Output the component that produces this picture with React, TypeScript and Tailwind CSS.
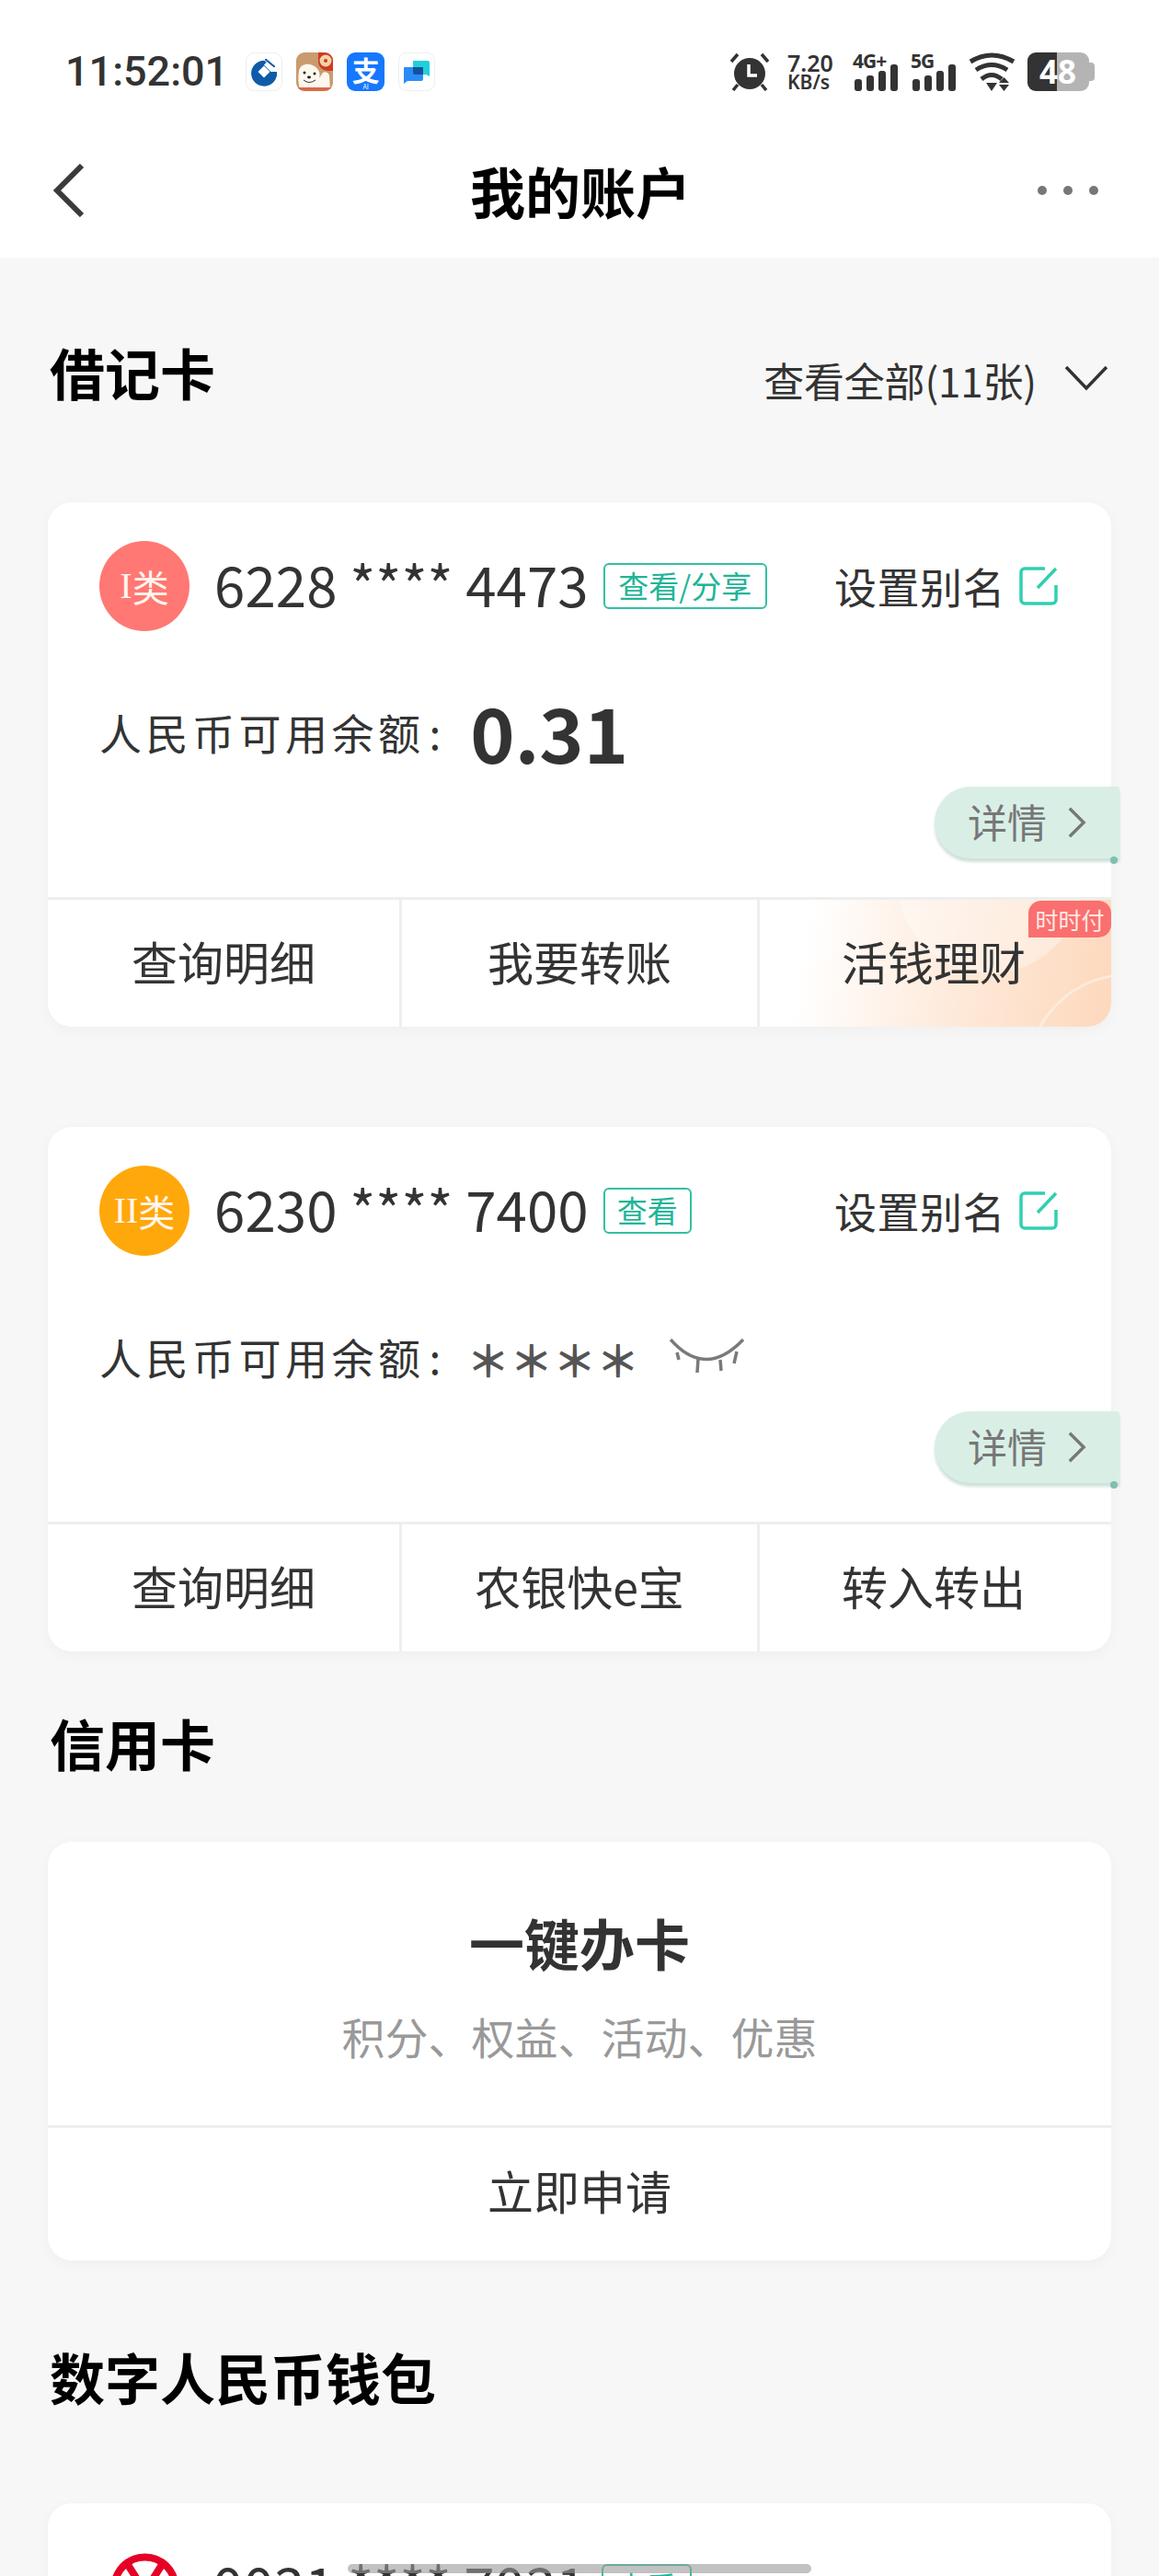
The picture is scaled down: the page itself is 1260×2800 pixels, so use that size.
import type { ReactNode } from 'react';

const Chevron = ({ className }: { className: string }) => (
  <svg className={className} viewBox="0 0 24 40" fill="none" stroke="currentColor" strokeWidth="4">
    <path d="M3 2l18 18L3 38" />
  </svg>
);

function AppIcons() {
  return (
    <div className="ml-[19px] flex gap-[15px]">
      {/* bank */}
      <div className="flex h-[42px] w-[40px] items-center justify-center rounded-[9px] border border-[#eeeeee] bg-white">
        <svg width="32" height="32" viewBox="0 0 32 32">
          <path d="M23 5.500A14 14 0 1 0 30 16h-6.500L16 8.500l5-5z" fill="#0e5ca8" />
          <path d="M16 9.500L22.500 16 16 22.500 9.500 16z" fill="#fff" />
          <path d="M18 1l11 9-2 2L16 3z" fill="#0e5ca8" stroke="#fff" strokeWidth="1" />
        </svg>
      </div>
      {/* bear */}
      <div className="h-[42px] w-[40px] overflow-hidden rounded-[9px] bg-[#c99b6f]">
        <svg width="40" height="42" viewBox="0 0 40 42">
          <path d="M24 0h16v20h-6a10 10 0 0 1-10-10z" fill="#cf3a22" />
          <circle cx="32" cy="9" r="6.500" fill="#f3d3a8" />
          <circle cx="32" cy="9" r="2" fill="#cf3a22" />
          <path d="M3 20c1-7 9-9 15-6s9 8 7 14l4-6c3-2 6 0 7 3l1 17H5c-3-7-3-15-2-22z" fill="#fdf7ee" />
          <circle cx="9" cy="22" r="1.500" fill="#222" />
          <circle cx="20" cy="23" r="1.500" fill="#222" />
          <ellipse cx="14" cy="27" rx="2" ry="1.400" fill="#222" />
          <path d="M8 30q6 5 13 0" fill="none" stroke="#333" strokeWidth="1" />
          <path d="M0 38h40v4H0z" fill="#d8694a" />
        </svg>
      </div>
      {/* pay */}
      <div className="relative flex h-[42px] w-[41px] items-start justify-center overflow-hidden rounded-[9px] bg-[#1677ff]">
        <span className="text-[30px] leading-[36px] font-bold text-white">支</span>
        <span className="absolute bottom-0 text-[7px] leading-[9px] text-white">AI</span>
      </div>
      {/* chat */}
      <div className="flex h-[42px] w-[40px] items-center justify-center rounded-[9px] border border-[#eeeeee] bg-white">
        <svg width="30" height="28" viewBox="0 0 30 28">
          <path d="M11 2h16a2 2 0 0 1 2 2v15l-4-2H11z" fill="#1fd0dc" />
          <path d="M2 9h18a2 2 0 0 1 2 2v11a2 2 0 0 1-2 2H5l-4 3V10a1 1 0 0 1 1-1z" fill="#2a8cf7" />
          <path d="M11 9h11v8H13a2 2 0 0 1-2-2z" fill="#14509f" />
        </svg>
      </div>
    </div>
  );
}

function Signal({ label, width }: { label: string; width: string }) {
  return (
    <div className={`relative h-[42px] ${width}`}>
      <span className="absolute top-[-3px] left-0 font-['Noto_Sans','Noto_Sans_CJK_SC',sans-serif] text-[21px] leading-[24px] font-bold tracking-[-1px] text-[#333333]">
        {label}
      </span>
      <svg className="absolute bottom-0 left-[2px]" width="48" height="29" viewBox="0 0 48 29" fill="#333333">
        <rect x="0" y="16" width="8" height="13" rx="3" />
        <rect x="13" y="12" width="8" height="17" rx="3" />
        <rect x="26" y="7" width="8" height="22" rx="3" />
        <rect x="39" y="0" width="8" height="29" rx="3" />
      </svg>
    </div>
  );
}

function StatusIcons() {
  return (
    <div className="flex items-center">
      <svg width="44" height="42" viewBox="0 0 44 42" fill="#333333">
        <circle cx="22" cy="23" r="17" />
        <path d="M2 10l7-8M42 10l-7-8M9 35l-5 6M35 35l5 6" stroke="#333333" strokeWidth="3.500" />
        <path d="M21 13v12h9" fill="none" stroke="#ffffff" strokeWidth="3.500" />
      </svg>
      <div className="ml-[19px] flex w-[52px] flex-col items-start font-['Noto_Sans',sans-serif] font-semibold text-[#333333]">
        <span className="text-[25px] leading-[23px]">7.20</span>
        <span className="text-[21px] leading-[19px]">KB/s</span>
      </div>
      <div className="ml-[19px]">
        <Signal label="4G+" width="w-[50px]" />
      </div>
      <div className="ml-[13px]">
        <Signal label="5G" width="w-[50px]" />
      </div>
      <svg className="ml-[13px]" width="51" height="42" viewBox="0 0 51 42" fill="#333333">
        <g fill="none" stroke="#333333" strokeWidth="5">
          <path d="M2 10Q25 -4 49 10" />
          <path d="M8 19Q25 8 42 19" />
          <path d="M14 29Q25 20 36 29" />
        </g>
        <path d="M19 33h12l-6 9zM33 33h11l-5.500-6zM33 35h11l-5.500 7z" />
      </svg>
      <div className="relative ml-[13px] flex h-[42px] items-center">
        <div className="h-[42px] w-[32px] rounded-l-[9px] bg-[#333333]" />
        <div className="h-[42px] w-[35px] rounded-r-[9px] bg-[#b4b4b4]" />
        <div className="h-[20px] w-[6px] rounded-r-[4px] bg-[#b4b4b4]" />
        <span className="absolute top-0 left-[13px] font-['Noto_Sans',sans-serif] text-[35px] leading-[42px] font-bold text-white">48</span>
      </div>
    </div>
  );
}

function SectionTitle({ children }: { children: ReactNode }) {
  return <h2 className="flex h-[80px] items-center pb-[6px] pl-[54px] text-[60px] font-bold text-black">{children}</h2>;
}

function Tag({ children, width }: { children: ReactNode; width: string }) {
  return (
    <span className={`ml-[16px] flex h-[50px] items-center justify-center rounded-[6px] border-2 border-[#33bfa3] text-[33px] text-[#1fb597] ${width}`}>
      {children}
    </span>
  );
}

function CardHead({ badge, number, tag, tagWidth, alias = true }: { badge: ReactNode; number: string; tag: string; tagWidth: string; alias?: boolean }) {
  return (
    <div className="flex h-[98px] items-center pr-[58px] pl-[56px]">
      {badge}
      <span className="mb-[6px] ml-[27px] text-[60px] leading-[70px] tracking-[0.1px] text-[#333333]">{number}</span>
      <Tag width={tagWidth}>{tag}</Tag>
      {alias && (
        <>
          <span className="mb-[2px] ml-auto text-[46px] leading-[50px] tracking-[0.5px] text-[#333333]">设置别名</span>
          <svg className="ml-[15px]" width="42" height="42" viewBox="0 0 42 42" fill="none" stroke="#2fd0b0" strokeWidth="3.500">
            <path d="M28 2H6a4 4 0 0 0-4 4v30a4 4 0 0 0 4 4h30a4 4 0 0 0 4-4V20M20 23L40 2" />
          </svg>
        </>
      )}
    </div>
  );
}

function TypeBadge({ roman, color }: { roman: string; color: string }) {
  return (
    <span className={`flex h-[98px] w-[98px] shrink-0 items-center justify-center rounded-full text-[40px] text-[#fff6ee] ${color}`}>
      <span className="font-['Liberation_Serif','Noto_Sans_CJK_SC',serif]">{roman}</span>
      <span>类</span>
    </span>
  );
}

function DetailPill() {
  return (
    <div className="absolute top-[309px] right-[-9px] flex h-[78px] w-[201px] items-center rounded-l-[39px] rounded-r-[2px] bg-[#d9efe6] pb-[5px] pl-[36px] text-[#777777] shadow-[0_4px_3px_rgba(120,170,150,0.35)]">
      <span className="text-[43px] leading-[50px]">详情</span>
      <Chevron className="mt-[5px] ml-[22px] h-[34px] w-[21px]" />
      <span className="absolute right-[2px] bottom-[-6px] h-[8px] w-[8px] rounded-full bg-[#7fbfae]" />
    </div>
  );
}

function ActionCell({ children, last }: { children: ReactNode; last?: boolean }) {
  return (
    <div className={`flex items-center justify-center pb-[6px] text-[50px] leading-[60px] text-[#333333] ${last ? 'pr-[4px]' : 'border-r-[3px] border-[#eeeeee]'}`}>
      {children}
    </div>
  );
}

const cardClass = 'relative rounded-[26px] bg-white shadow-[0_4px_16px_rgba(0,0,0,0.035)]';

function DebitCard({ top, balance, actions }: { top: ReactNode; balance: ReactNode; actions: ReactNode }) {
  return (
    <section className={`${cardClass} mx-[52px] flex h-[570px] flex-col`}>
      <div className="h-[429px] pt-[42px]">
        {top}
        <div className="mt-[74px] flex h-[70px] items-center pl-[56px] text-[#333333]">
          <span className="text-[46px] leading-[60px] tracking-[4.500px]">人民币可用余额</span>
          <span className="ml-[5px] text-[46px] leading-[60px]">:</span>
          {balance}
        </div>
      </div>
      <DetailPill />
      <div className="grid flex-1 grid-cols-[385px_389px_1fr] border-t-[3px] border-[#eeeeee]">{actions}</div>
    </section>
  );
}

export default function App() {
  return (
    <div className="relative h-[2800px] w-[1260px] overflow-hidden bg-[#f7f7f7] font-['Noto_Sans_CJK_SC','Noto_Sans',sans-serif]">
      <header className="h-[280px] bg-white pt-[57px]">
        <div className="flex h-[42px] items-center justify-between pr-[70px] pl-[71px]">
          <div className="flex items-center">
            <span className="font-['Roboto',sans-serif] text-[45px] leading-[42px] font-medium text-[#333333]">11:52:01</span>
            <AppIcons />
          </div>
          <StatusIcons />
        </div>
        <div className="mt-[78px] grid h-[60px] grid-cols-[1fr_auto_1fr] items-center pr-[54px] pl-[56px]">
          <svg className="text-[#3a3a3a]" width="36" height="58" viewBox="0 0 36 58" fill="none" stroke="currentColor" strokeWidth="6">
            <path d="M33 2L6 29l27 27" />
          </svg>
          <h1 className="text-[60px] leading-[60px] font-bold text-black">我的账户</h1>
          <div className="mr-[12px] flex gap-[18px] justify-self-end">
            <span className="h-[10px] w-[10px] rounded-full bg-[#777777]" />
            <span className="h-[10px] w-[10px] rounded-full bg-[#777777]" />
            <span className="h-[10px] w-[10px] rounded-full bg-[#777777]" />
          </div>
        </div>
      </header>

      <div className="mt-[87px] flex items-center pr-[55px]">
        <div className="flex-1">
          <SectionTitle>借记卡</SectionTitle>
        </div>
        <span className="mt-[12px] text-[44px] leading-[50px] tracking-[-0.2px] text-[#333333]">查看全部(11张)</span>
        <svg className="mt-[8px] ml-[30px] text-[#333333]" width="48" height="30" viewBox="0 0 48 30" fill="none" stroke="currentColor" strokeWidth="3.500">
          <path d="M2 3l22 23L46 3" />
        </svg>
      </div>

      <div className="mt-[99px]">
        <DebitCard
          top={<CardHead badge={<TypeBadge roman="I" color="bg-[#ff7873]" />} number="6228 **** 4473" tag="查看/分享" tagWidth="w-[178px]" />}
          balance={<span className="ml-[32px] text-[82px] leading-[90px] font-bold">0.31</span>}
          actions={
            <>
              <ActionCell>查询明细</ActionCell>
              <ActionCell>我要转账</ActionCell>
              <div className="relative flex items-center justify-center overflow-hidden rounded-br-[26px] bg-[linear-gradient(100deg,#ffffff_14%,#fee9d9_58%,#fdd8bc_100%)] pr-[4px] pb-[6px] text-[50px] leading-[60px] text-[#333333]">
                <span className="absolute top-[-120px] left-[150px] h-[200px] w-[200px] rounded-full bg-white/35" />
                <span className="absolute top-[80px] left-[290px] h-[220px] w-[220px] rounded-full border-[3px] border-white/40" />
                <span className="relative">活钱理财</span>
                <span className="absolute top-[1px] right-0 flex h-[40px] w-[90px] items-center justify-center rounded-tl-[14px] rounded-tr-[14px] rounded-br-[14px] bg-[#fa6f6f] text-[25px] text-[#ffe9e4]">
                  时时付
                </span>
              </div>
            </>
          }
        />
      </div>

      <div className="mt-[109px]">
        <DebitCard
          top={<CardHead badge={<TypeBadge roman="II" color="bg-[#ffa80b]" />} number="6230 **** 7400" tag="查看" tagWidth="w-[96px]" />}
          balance={
            <>
              <span className="mt-[5px] ml-[28px] text-[47px] leading-[60px] font-bold text-[#555555]">＊＊＊＊</span>
              <svg className="mt-[-1px] ml-[33px]" width="81" height="38" viewBox="0 0 81 38" fill="none" stroke="#7a7a7a" strokeWidth="3.500">
                <path d="M1 1Q39 44 80 1M8 15l2 8M31 22l-1 15M55 23l1 12M73 14l-3 13" />
              </svg>
            </>
          }
          actions={
            <>
              <ActionCell>查询明细</ActionCell>
              <ActionCell>农银快e宝</ActionCell>
              <ActionCell last>转入转出</ActionCell>
            </>
          }
        />
      </div>

      <div className="mt-[62px]">
        <SectionTitle>信用卡</SectionTitle>
      </div>

      <section className={`${cardClass} mx-[52px] mt-[65px] flex h-[455px] flex-col`}>
        <div className="flex h-[311px] flex-col items-center border-b-[3px] border-[#eeeeee]">
          <span className="mt-[74px] text-[60px] leading-[70px] font-bold text-[#333333]">一键办卡</span>
          <span className="mt-[37px] text-[47px] leading-[60px] text-[#999999]">积分、权益、活动、优惠</span>
        </div>
        <div className="flex flex-1 items-center justify-center pb-[10px] text-[50px] leading-[60px] text-[#333333]">立即申请</div>
      </section>

      <div className="mt-[89px]">
        <SectionTitle>数字人民币钱包</SectionTitle>
      </div>

      <section className={`${cardClass} mx-[52px] mt-[95px] h-[300px] pt-[42px]`}>
        <CardHead
          alias={false}
          badge={
            <svg className="mr-[9px] ml-[12px] shrink-0" width="75" height="75" viewBox="0 0 75 75" fill="none" stroke="#e60026" strokeWidth="8">
              <circle cx="37.500" cy="37.500" r="33" />
              <path d="M16 8l21.500 34L59 8M37.500 42v30M15 50h45" />
            </svg>
          }
          number="0031 **** 7031"
          tag="查看"
          tagWidth="w-[98px]"
        />
      </section>

      {/* home indicator */}
      <div className="absolute top-[2787px] left-[378px] h-[10px] w-[504px] rounded-full bg-[#999999]/60" />
    </div>
  );
}
